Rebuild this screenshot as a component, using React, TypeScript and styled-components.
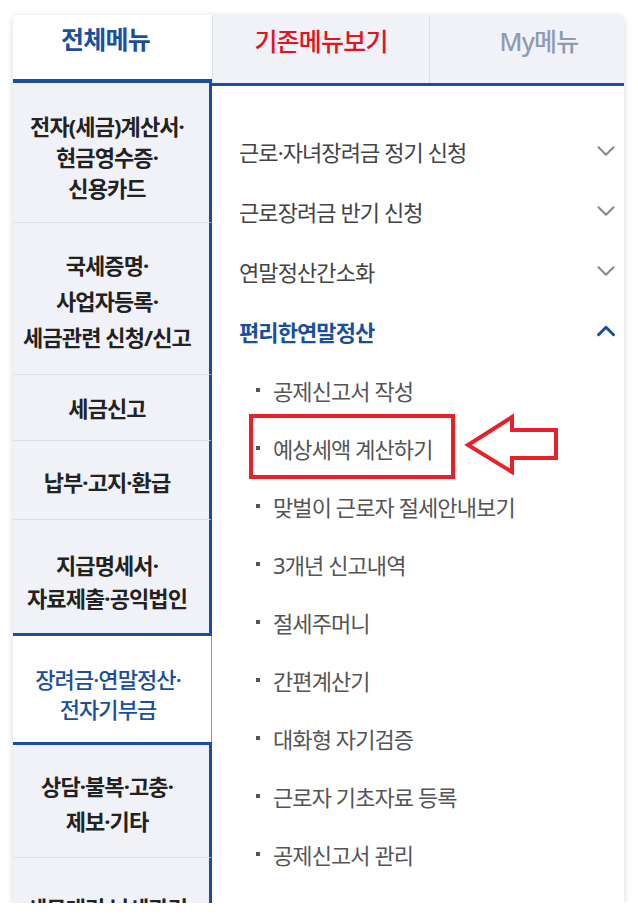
import styled, { createGlobalStyle, css } from 'styled-components';
import { ChevronDown, ChevronUp } from 'lucide-react';

const BLUE = '#1b4f9d';
const RED = '#e8202a';

const GlobalStyle = createGlobalStyle`
  html, body {
    margin: 0;
    padding: 0;
    background: #fff;
    font-family: "Noto Sans", "Noto Sans CJK KR", sans-serif;
  }
  * { box-sizing: border-box; }
`;

const Card = styled.div`
  margin: 15px 0 0 13px;
  width: 611px;
  height: 888px;
  border-radius: 6px 6px 0 0;
  overflow: hidden;
  background: #fff;
  box-shadow: 0 1px 6px rgba(0, 0, 0, 0.16);
  display: flex;
  flex-direction: column;
`;

const Tabs = styled.div`
  display: grid;
  grid-template-columns: 199px 217px 1fr;
  height: 68px;
  flex-shrink: 0;
`;

const Tab = styled.div<{ $active?: boolean; $color: string; $shift?: number }>`
  display: flex;
  align-items: center;
  justify-content: center;
  padding-bottom: 18px;
  padding-left: ${p => Math.max(p.$shift ?? 0, 0)}px;
  padding-right: ${p => Math.max(-(p.$shift ?? 0), 0)}px;
  font-size: 25px;
  letter-spacing: -0.8px;
  color: ${p => p.$color};
  font-weight: ${p => (p.$active ? 700 : 500)};
  background: ${p => (p.$active ? '#fff' : '#f1f2f8')};
  ${p =>
    p.$active
      ? css`border-bottom: 4px solid ${BLUE};`
      : css`border-left: 1px solid #dcdfe6;`}
`;

const Body = styled.div`
  display: flex;
  flex: 1;
  min-height: 0;
`;

const LeftCol = styled.div`
  width: 199px;
  flex-shrink: 0;
  display: flex;
  flex-direction: column;
`;

const LeftItem = styled.div<{
  $h: number;
  $lh: number;
  $pt?: number;
  $selected?: boolean;
  $blueTop?: boolean;
  $blueBottom?: boolean;
}>`
  height: ${p => p.$h}px;
  flex-shrink: 0;
  display: flex;
  align-items: center;
  justify-content: center;
  text-align: center;
  padding: ${p => p.$pt ?? 0}px 8px 0 0;
  font-size: 22px;
  letter-spacing: -0.9px;
  line-height: ${p => p.$lh}px;
  color: ${p => (p.$selected ? BLUE : '#222')};
  font-weight: ${p => (p.$selected ? 500 : 700)};
  background: ${p => (p.$selected ? '#fff' : '#f1f2f8')};
  border-right: ${p => (p.$selected ? '1px solid #8a9ab4' : `3px solid ${BLUE}`)};
  border-bottom: ${p => (p.$blueBottom ? `3px solid ${BLUE}` : p.$selected ? 'none' : '1px solid #dcdfe5')};
  border-top: ${p => (p.$blueTop ? `3px solid ${BLUE}` : 'none')};
`;

const RightPanel = styled.div`
  flex: 1;
  border-top: 3px solid ${BLUE};
  padding-top: 35px;
  background: #fff;
`;

const MainRow = styled.div<{ $open?: boolean }>`
  height: 60px;
  display: flex;
  align-items: center;
  justify-content: space-between;
  padding: 0 3px 0 27px;
  font-size: 22px;
  letter-spacing: -0.9px;
  color: ${p => (p.$open ? BLUE : '#444')};
  font-weight: ${p => (p.$open ? 700 : 400)};
`;

const SubRow = styled.div`
  position: relative;
  height: 58px;
  display: flex;
  align-items: center;
  gap: 13px;
  padding-left: 44px;
  font-size: 22px;
  letter-spacing: -0.9px;
  color: #555;
`;

const Bullet = styled.span`
  width: 4px;
  height: 4px;
  background: #555;
  flex-shrink: 0;
`;

const HighlightBox = styled.div`
  position: absolute;
  left: 37px;
  top: -5px;
  width: 206px;
  height: 65px;
  border: 4px solid ${RED};
  pointer-events: none;
`;

const Arrow = styled.svg`
  position: absolute;
  left: 252px;
  top: -6px;
`;

const leftItems = [
  { lines: ['전자(세금)계산서·', '현금영수증·', '신용카드'], h: 140, lh: 31, pt: 10 },
  { lines: ['국세증명·', '사업자등록·', '세금관련 신청/신고'], h: 152, lh: 36, pt: 4 },
  { lines: ['세금신고'], h: 66, lh: 30, pt: 0 },
  { lines: ['납부·고지·환급'], h: 79, lh: 30, pt: 4 },
  { lines: ['지급명세서·', '자료제출·공익법인'], h: 116, lh: 33, pt: 10, blueBottom: true },
  { lines: ['장려금·연말정산·', '전자기부금'], h: 106, lh: 30, pt: 10, selected: true },
  { lines: ['상담·불복·고충·', '제보·기타'], h: 116, lh: 35, pt: 6, blueTop: true },
  { lines: ['세무대리·납세관리'], h: 100, lh: 30, pt: 0 },
];

const mainMenus = ['근로·자녀장려금 정기 신청', '근로장려금 반기 신청', '연말정산간소화'];

const subMenus = [
  '공제신고서 작성',
  '예상세액 계산하기',
  '맞벌이 근로자 절세안내보기',
  '3개년 신고내역',
  '절세주머니',
  '간편계산기',
  '대화형 자기검증',
  '근로자 기초자료 등록',
  '공제신고서 관리',
  '의료비 세부내역 관리',
];

const App = () => {
  return (
    <>
      <GlobalStyle />
      <Card>
        <Tabs>
          <Tab $active $color={BLUE} $shift={-14}>전체메뉴</Tab>
          <Tab $color="#e2141c">기존메뉴보기</Tab>
          <Tab $color="#8d9bb3" $shift={24}>My메뉴</Tab>
        </Tabs>
        <Body>
          <LeftCol>
            {leftItems.map((it, i) => (
              <LeftItem
                key={i}
                $h={it.h}
                $lh={it.lh}
                $pt={it.pt}
                $selected={it.selected}
                $blueTop={it.blueTop}
                $blueBottom={it.blueBottom}
              >
                <div>
                  {it.lines.map((l, j) => (
                    <div key={j}>{l}</div>
                  ))}
                </div>
              </LeftItem>
            ))}
          </LeftCol>
          <RightPanel>
            {mainMenus.map(m => (
              <MainRow key={m}>
                <span>{m}</span>
                <ChevronDown size={30} strokeWidth={1.6} color="#888" />
              </MainRow>
            ))}
            <MainRow $open>
              <span>편리한연말정산</span>
              <ChevronUp size={30} strokeWidth={2.4} color={BLUE} />
            </MainRow>
            {subMenus.map((s, i) => (
              <SubRow key={s}>
                <Bullet />
                <span>{s}</span>
                {i === 1 && (
                  <>
                    <HighlightBox />
                    <Arrow width="96" height="64" viewBox="0 0 96 64">
                      <polygon
                        points="4,32 48,4 48,17 92,17 92,45 48,45 48,59"
                        fill="#fff"
                        stroke={RED}
                        strokeWidth="4"
                        strokeLinejoin="miter"
                      />
                    </Arrow>
                  </>
                )}
              </SubRow>
            ))}
          </RightPanel>
        </Body>
      </Card>
    </>
  );
};

export default App;
